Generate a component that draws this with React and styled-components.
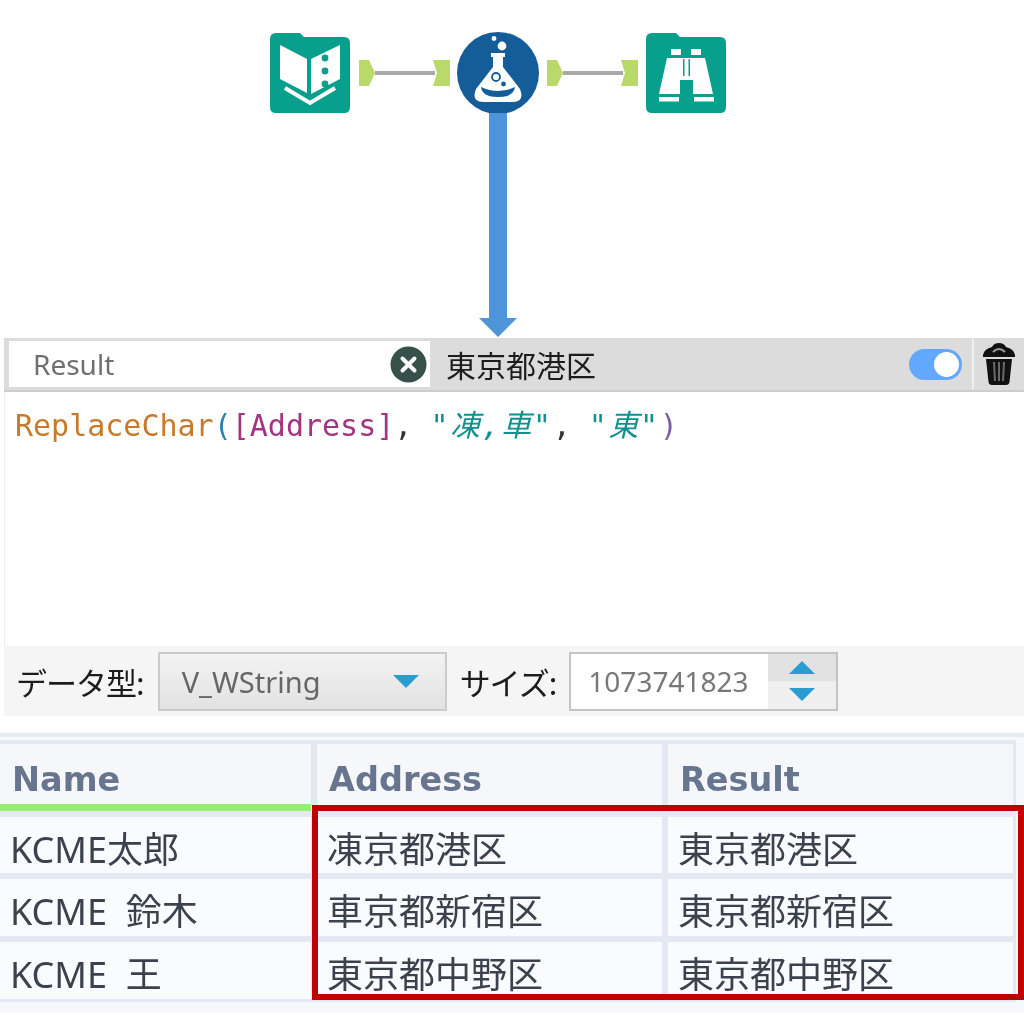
import styled, { createGlobalStyle } from 'styled-components';

const GlobalStyle = createGlobalStyle`
  html, body {
    margin: 0;
    padding: 0;
    background: #ffffff;
  }
  * {
    box-sizing: border-box;
  }
`;

const Page = styled.div`
  width: 1024px;
  height: 1015px;
  overflow: hidden;
  background: #ffffff;
  font-family: "Noto Sans", "Noto Sans CJK JP", sans-serif;
  filter: blur(0.7px);
`;

const Canvas = styled.div`
  height: 338px;
  padding: 32px 0 0 270px;
  display: flex;
  flex-direction: column;
`;

const NodeRow = styled.div`
  display: flex;
  align-items: center;
  height: 81px;
`;

const Wire = styled.svg`
  width: 91px;
  height: 26px;
  margin: 0 ${p => p.$right}px 0 ${p => p.$left}px;
  flex: none;
`;

const DownArrow = styled.svg`
  display: block;
  width: 38px;
  height: 224px;
  margin-left: 209px;
`;

const Panel = styled.section`
  margin-left: 4px;
  height: 378px;
  display: flex;
  flex-direction: column;
`;

const PanelHead = styled.div`
  height: 54px;
  background: #dcdcdc;
  border-bottom: 2px solid #cdcdcd;
  display: flex;
  align-items: center;
  padding-left: 5px;
`;

const NameBox = styled.div`
  width: 421px;
  height: 46px;
  background: #ffffff;
  display: flex;
  align-items: center;
  justify-content: space-between;
  padding: 0 3px 0 24px;
  font-size: 28px;
  color: #6f6f6f;
`;

const ClearBtn = styled.svg`
  width: 37px;
  height: 37px;
`;

const HeadValue = styled.div`
  flex: 1;
  padding-left: 16px;
  font-family: "Noto Sans CJK JP", sans-serif;
  font-size: 30px;
  color: #1c1c1c;
`;

const Toggle = styled.div`
  width: 53px;
  height: 31px;
  border-radius: 16px;
  background: #62a8ff;
  display: flex;
  align-items: center;
  justify-content: flex-end;
  padding-right: 3px;
`;

const Knob = styled.div`
  width: 25px;
  height: 25px;
  border-radius: 50%;
  background: #ffffff;
`;

const Trash = styled.div`
  width: 52px;
  height: 52px;
  margin-left: 10px;
  border-left: 2px solid #efefef;
  display: flex;
  align-items: center;
  justify-content: center;
`;

const CodeArea = styled.div`
  flex: 1;
  background: #ffffff;
  border-left: 1px solid #ececec;
  padding: 14px 0 0 10px;
  font-family: "DejaVu Sans Mono", "Noto Sans CJK JP", monospace;
  font-size: 30px;
  line-height: 40px;
  white-space: pre;
`;

const Token = styled.span`
  color: ${p => p.$color};
`;

const StringToken = styled.span`
  color: #0f9191;
  font-style: italic;
  letter-spacing: 1.6px;
`;

const PanelFoot = styled.div`
  height: 70px;
  background: #f5f5f5;
  display: flex;
  align-items: center;
  padding-left: 12px;
`;

const FootLabel = styled.span`
  font-family: "Noto Sans CJK JP", sans-serif;
  font-size: 31px;
  letter-spacing: -1px;
  color: #1c1c1c;
  white-space: nowrap;
  margin-right: ${p => p.$gap}px;
`;

const Select = styled.div`
  width: 289px;
  height: 59px;
  margin-right: 13px;
  border: 2px solid #cbcbcb;
  background: linear-gradient(#f3f3f3, #e2e2e2);
  display: flex;
  align-items: center;
  justify-content: space-between;
  padding: 0 26px 0 22px;
  font-size: 29px;
  color: #666666;
`;

const Caret = styled.div`
  width: 0;
  height: 0;
  border-left: 13px solid transparent;
  border-right: 13px solid transparent;
  border-${p => (p.$up ? 'bottom' : 'top')}: 13px solid #2b9ccf;
`;

const NumberBox = styled.div`
  width: 269px;
  height: 59px;
  border: 2px solid #c4c4c4;
  background: #ffffff;
  display: flex;
  align-items: center;
`;

const NumberValue = styled.div`
  flex: 1;
  padding-left: 17px;
  font-size: 28px;
  color: #787878;
`;

const Spinner = styled.div`
  width: 68px;
  height: 100%;
  background: #e9e9e9;
  display: flex;
  flex-direction: column;
`;

const SpinBtn = styled.div`
  flex: 1;
  display: flex;
  align-items: center;
  justify-content: center;
  background: ${p => (p.$up ? '#e2e2e2' : '#efefef')};
`;

const Results = styled.div`
  position: relative;
  margin-top: 17px;
  height: 280px;
  background: #f7f8fc;
  border-top: 4px solid #e6ebf5;
  padding-top: 3px;
`;

const ResultGrid = styled.div`
  display: grid;
  grid-template-columns: 311px 345px 345px;
  grid-template-rows: 67px 56px 57px 57px;
  column-gap: 6px;
  row-gap: 6px;
  width: 1016px;
  background: #e3e8f3;
  padding: 4px 3px 3px 0;
`;

const HeadCell = styled.div`
  background: #f5f7fb;
  border-bottom: ${p => p.$bar}px solid #97ee70;
  padding-left: 12px;
  padding-top: 12px;
  font-family: "DejaVu Sans", sans-serif;
  font-weight: bold;
  font-size: 33.5px;
  line-height: 48px;
  color: #67758f;
`;

const Cell = styled.div`
  background: #fafbff;
  display: flex;
  align-items: center;
  padding: 4px 0 0 10px;
  font-family: "Noto Sans", "Noto Sans CJK JP", sans-serif;
  font-size: 36px;
  color: #3c424d;
  white-space: pre;
`;

const RedFrame = styled.div`
  position: absolute;
  left: 312px;
  top: 68px;
  width: 712px;
  height: 195px;
  border: 6px solid #c00000;
`;

const Folder = ({ children }) => (
  <svg width="80" height="80" viewBox="0 0 80 80" style={{ flex: 'none' }}>
    <path d="M6 0H30L34 4H74Q80 4 80 10V74Q80 80 74 80H6Q0 80 0 74V6Q0 0 6 0Z" fill="#08a08c" />
    {children}
  </svg>
);

const BookNode = () => (
  <Folder>
    <path d="M10 12L37 26V60L10 46Z" fill="#fff" />
    <path d="M41 26L70 12V46L41 61Z" fill="#fff" />
    <circle cx="55" cy="25" r="3.4" fill="#08a08c" />
    <circle cx="55" cy="38" r="3.4" fill="#08a08c" />
    <circle cx="55" cy="51" r="3.4" fill="#08a08c" />
    <path d="M15 55L40 70L65 55" fill="none" stroke="#fff" strokeWidth="4" />
  </Folder>
);

const BinocularNode = () => (
  <Folder>
    <rect x="25" y="16" width="10" height="6" fill="#fff" />
    <rect x="45" y="16" width="10" height="6" fill="#fff" />
    <path d="M21 25H59L67 61H47V47H34V61H13Z" fill="#fff" />
    <rect x="37" y="26" width="1.5" height="17" fill="#08a08c" />
    <rect x="42.5" y="26" width="1.5" height="17" fill="#08a08c" />
    <rect x="13" y="64" width="20" height="4.5" fill="#fff" />
    <rect x="48" y="64" width="20" height="4.5" fill="#fff" />
  </Folder>
);

const FlaskNode = () => (
  <svg width="82" height="82" viewBox="0 0 82 82" style={{ flex: 'none' }}>
    <circle cx="41" cy="41" r="41" fill="#155d99" />
    <circle cx="37" cy="6.5" r="2.4" fill="#fff" />
    <circle cx="45" cy="14" r="4.4" fill="#fff" />
    <path d="M34 21H48V25H46V35L63 57Q68 70 56 70H26Q14 70 19 57L36 35V25H34Z" fill="#fff" />
    <path d="M24 55Q41 63 58 55Q57 65 41 65Q25 65 24 55Z" fill="#155d99" />
    <circle cx="39" cy="45" r="4" fill="none" stroke="#155d99" strokeWidth="1.8" />
    <circle cx="46.5" cy="52" r="2.4" fill="#155d99" />
  </svg>
);

const Connector = ({ left, right }) => (
  <Wire viewBox="0 0 91 26" $left={left} $right={right}>
    <rect x="16" y="11" width="60" height="4" fill="#a8a8a8" />
    <path d="M0 0H10L16 13L10 26H0Z" fill="#b9d96a" />
    <path d="M74 0H91V26H74L78 13Z" fill="#b9d96a" />
  </Wire>
);

const columns = ['Name', 'Address', 'Result'];
const rows = [
  ['KCME太郎', '凍京都港区', '東京都港区'],
  ['KCME  鈴木', '車京都新宿区', '東京都新宿区'],
  ['KCME  王', '東京都中野区', '東京都中野区'],
];

export default function App() {
  return (
    <Page>
      <GlobalStyle />
      <Canvas>
        <NodeRow>
          <BookNode />
          <Connector left={9} right={7} />
          <FlaskNode />
          <Connector left={8} right={8} />
          <BinocularNode />
        </NodeRow>
        <DownArrow viewBox="0 0 38 224">
          <path d="M10 0H28V205H38L19 224L0 205H10Z" fill="#4f94d9" />
        </DownArrow>
      </Canvas>

      <Panel>
        <PanelHead>
          <NameBox>
            Result
            <ClearBtn viewBox="0 0 37 37">
              <circle cx="18.5" cy="18.5" r="18" fill="#37504a" />
              <path d="M12.5 12.5L24.5 24.5M24.5 12.5L12.5 24.5" stroke="#fff" strokeWidth="4" strokeLinecap="round" />
            </ClearBtn>
          </NameBox>
          <HeadValue>東京都港区</HeadValue>
          <Toggle>
            <Knob />
          </Toggle>
          <Trash>
            <svg width="34" height="44" viewBox="0 0 34 44">
              <path d="M1 13Q2 7 10 5Q12 1 17 1Q22 1 24 5Q32 7 33 13V15H1Z" fill="#111" />
              <path d="M11 10Q17 4 23 10" fill="none" stroke="#9a9a9a" strokeWidth="2" />
              <path d="M4 17H30L27.5 40Q27 43 24 43H10Q7 43 6.5 40Z" fill="#111" />
              <path d="M12 20L13 39M17 20V39M22 20L21 39" stroke="#6a6a6a" strokeWidth="2" />
            </svg>
          </Trash>
        </PanelHead>
        <CodeArea>
          <Token $color="#c87a2c">ReplaceChar</Token>
          <Token $color="#2f7fb0">(</Token>
          <Token $color="#a23482">[Address]</Token>
          <Token $color="#333">, </Token>
          <StringToken>"凍,車"</StringToken>
          <Token $color="#333">, </Token>
          <StringToken>"東"</StringToken>
          <Token $color="#7a5ca8">)</Token>
        </CodeArea>
        <PanelFoot>
          <FootLabel $gap={14}>データ型:</FootLabel>
          <Select>
            V_WString
            <Caret />
          </Select>
          <FootLabel $gap={13}>サイズ:</FootLabel>
          <NumberBox>
            <NumberValue>1073741823</NumberValue>
            <Spinner>
              <SpinBtn $up>
                <Caret $up />
              </SpinBtn>
              <SpinBtn>
                <Caret />
              </SpinBtn>
            </Spinner>
          </NumberBox>
        </PanelFoot>
      </Panel>

      <Results>
        <ResultGrid>
          {columns.map((c, i) => (
            <HeadCell key={c} $bar={i === 0 ? 7 : 3}>{c}</HeadCell>
          ))}
          {rows.flat().map((text, i) => (
            <Cell key={i}>{text}</Cell>
          ))}
        </ResultGrid>
        <RedFrame />
      </Results>
    </Page>
  );
}
